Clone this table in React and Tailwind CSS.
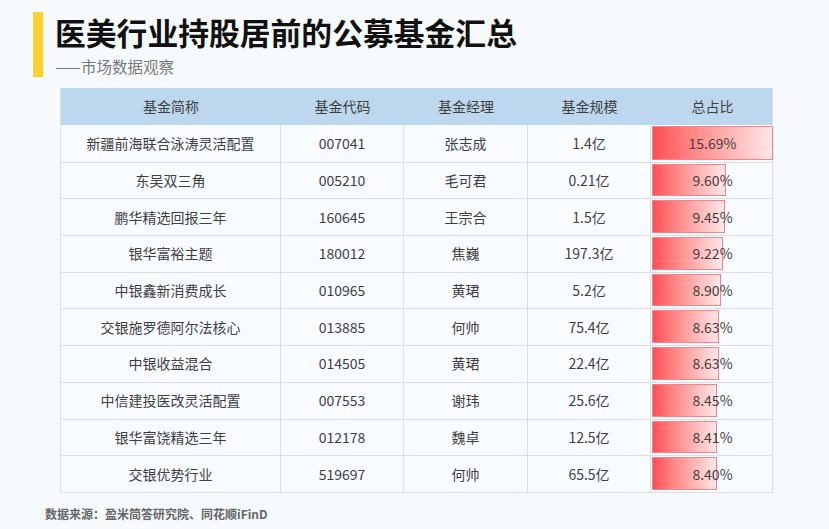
import React from 'react';

const rows = [
  { name: '新疆前海联合泳涛灵活配置', code: '007041', manager: '张志成', size: '1.4亿', pct: 15.69 },
  { name: '东吴双三角', code: '005210', manager: '毛可君', size: '0.21亿', pct: 9.6 },
  { name: '鹏华精选回报三年', code: '160645', manager: '王宗合', size: '1.5亿', pct: 9.45 },
  { name: '银华富裕主题', code: '180012', manager: '焦巍', size: '197.3亿', pct: 9.22 },
  { name: '中银鑫新消费成长', code: '010965', manager: '黄珺', size: '5.2亿', pct: 8.9 },
  { name: '交银施罗德阿尔法核心', code: '013885', manager: '何帅', size: '75.4亿', pct: 8.63 },
  { name: '中银收益混合', code: '014505', manager: '黄珺', size: '22.4亿', pct: 8.63 },
  { name: '中信建投医改灵活配置', code: '007553', manager: '谢玮', size: '25.6亿', pct: 8.45 },
  { name: '银华富饶精选三年', code: '012178', manager: '魏卓', size: '12.5亿', pct: 8.41 },
  { name: '交银优势行业', code: '519697', manager: '何帅', size: '65.5亿', pct: 8.4 },
];

const MAX = 15.69;
const cols = 'grid grid-cols-[220px_123px_124px_123px_123px]';
const font = { fontFamily: '"Noto Sans CJK SC", "Noto Sans", sans-serif' };

export default function App() {
  return (
    <div
      className="w-[829px] h-[529px] bg-[#f7fafd] overflow-hidden text-[#3f3f3f]"
      style={font}
    >
      {/* title */}
      <div className="flex pt-[12px] pl-[33px] gap-[12px]">
        <div className="w-[10px] h-[65px] bg-[#fdd22f]" />
        <div className="flex flex-col">
          <div className="text-[30.8px] leading-[40px] font-bold text-[#111]">医美行业持股居前的公募基金汇总</div>
          <div className="text-[15.5px] leading-[22px] mt-[3px] text-[#7a7a7a]">——市场数据观察</div>
        </div>
      </div>

      {/* table */}
      <div className="ml-[60px] mt-[11px] w-[713px] border-l border-r border-b border-[#dddddd]">
        <div className={`${cols} h-[37px] bg-[#bdd7ee] text-[14px]`}>
          {['基金简称', '基金代码', '基金经理', '基金规模', '总占比'].map((h) => (
            <div key={h} className="flex items-center justify-center">{h}</div>
          ))}
        </div>
        {rows.map((r, i) => (
          <div
            key={i}
            className={`${cols} h-[36.7px] bg-[#f8fbff] text-[14px] ${i > 0 ? 'border-t border-[#dddddd]' : ''}`}
          >
            <div className="flex items-center justify-center border-r border-[#dddddd]">{r.name}</div>
            <div className="flex items-center justify-center border-r border-[#dddddd]">{r.code}</div>
            <div className="flex items-center justify-center border-r border-[#dddddd]">{r.manager}</div>
            <div className="flex items-center justify-center border-r border-[#dddddd]">{r.size}</div>
            <div className="relative flex items-center justify-center">
              <div
                className="absolute left-[1px] top-[1px] bottom-[2px] bg-gradient-to-r from-[#ff4b55] to-[#ffe6e9] border border-[#f4848c]"
                style={{ width: `${(r.pct / MAX) * 121}px` }}
              />
              <span className="relative">{r.pct.toFixed(2)}%</span>
            </div>
          </div>
        ))}
      </div>

      {/* source */}
      <div className="pl-[45px] mt-[12px] text-[12px] font-bold text-[#666]">
        数据来源：盈米简答研究院、同花顺iFinD
      </div>
    </div>
  );
}
